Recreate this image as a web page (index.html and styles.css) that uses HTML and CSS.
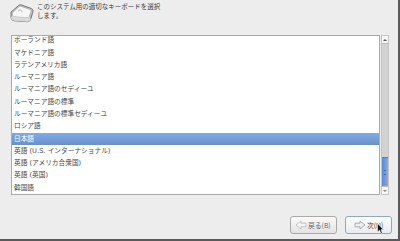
FILE: index.html
```html
<!DOCTYPE html>
<html lang="ja">
<head>
<meta charset="utf-8">
<title>キーボード</title>
<link rel="stylesheet" href="styles.css">
</head>
<body>
<div class="window">
  <header class="head">
    <svg class="kbd-icon" width="24" height="21" viewBox="0 0 24 21">
      <path d="M1 9 L8.8 2.4 Q10 1.4 11.6 2 L21.6 5.6 Q23.4 6.4 23 8.6 L20.6 16.4 Q19.8 18.8 17.4 18.7 L4.2 17.8 Q1.2 17.4 1 14.6 Z" fill="#bdbdbd" stroke="#6f6f6f" stroke-width="0.9"/>
      <path d="M2.6 9.4 L9.4 3.6 Q10.2 3 11.2 3.4 L20.2 6.6 Q21.4 7.1 21 8.4 L19.2 13.6 Q18.7 14.8 17.4 14.7 L4.4 13.8 Q2.6 13.6 2.5 12.2 Z" fill="#f6f6f6" stroke="#a8a8a8" stroke-width="0.6"/>
      <path d="M4.4 13.8 L17.4 14.7 Q18.7 14.8 19.2 13.6 L20.6 16.4 Q19.8 18.8 17.4 18.7 L4.2 17.8 Q1.2 17.4 1 14.6 L2.5 12.2 Q2.6 13.6 4.4 13.8 Z" fill="#d9d9d9"/>
      <path d="M8 8.2 L10.2 6.6 L12.6 9.2" fill="none" stroke="#999" stroke-width="0.7"/>
    </svg>
    <p class="prompt">このシステム用の適切なキーボードを選択<br>します。</p>
  </header>

  <div class="listarea">
    <div class="listbox">
      <ul class="list">
        <li>ポーランド語</li>
        <li>マケドニア語</li>
        <li>ラテンアメリカ語</li>
        <li>ルーマニア語</li>
        <li>ルーマニア語のセディーユ</li>
        <li>ルーマニア語の標準</li>
        <li>ルーマニア語の標準セディーユ</li>
        <li>ロシア語</li>
        <li class="selected">日本語</li>
        <li>英語 (U.S. インターナショナル)</li>
        <li>英語 (アメリカ合衆国)</li>
        <li>英語 (英国)</li>
        <li>韓国語</li>
      </ul>
    </div>
    <div class="scrollbar">
      <div class="sb-btn up"></div>
      <div class="trough"><div class="thumb"></div></div>
      <div class="sb-btn down"></div>
    </div>
  </div>

  <footer class="buttons">
    <button class="btn back" type="button">
      <svg class="arrow" width="12" height="10" viewBox="0 0 12 10">
        <path d="M11 3.2 H6 V1 L1 5 L6 9 V6.8 H11 Z" fill="#f4f4f4" stroke="#b8b8b8" stroke-width="0.8"/>
      </svg>
      <span>戻る(B)</span>
    </button>
    <button class="btn next" type="button">
      <svg class="arrow" width="12" height="10" viewBox="0 0 12 10">
        <path d="M1 3.2 H6 V1 L11 5 L6 9 V6.8 H1 Z" fill="#eeeeee" stroke="#9c9c9c" stroke-width="0.8"/>
      </svg>
      <span>次(N)</span>
      <svg class="cursor" width="7" height="11" viewBox="0 0 7 11">
        <path d="M0.5 0.5 V9 L2.5 7.2 L4 10.5 L5.4 9.9 L4 6.7 L6.5 6.7 Z" fill="#111" stroke="#fff" stroke-width="0.6"/>
      </svg>
    </button>
  </footer>
</div>
</body>
</html>
```

FILE: styles.css
```css
html, body {
  margin: 0;
  padding: 0;
}

body {
  width: 400px;
  height: 241px;
  overflow: hidden;
  background: #ededed;
  font-family: "DejaVu Sans", "Noto Sans CJK JP", sans-serif;
  color: #444;
}

.window {
  box-sizing: border-box;
  width: 400px;
  height: 241px;
  margin: 0;
  padding-left: 2px;
  border-right: 2px solid #5a5a5a;
  border-bottom: 2px solid #5a5a5a;
  display: flex;
  flex-direction: column;
}

.head {
  box-sizing: border-box;
  height: 35px;
  margin-left: 8px;
  padding-top: 3px;
  display: flex;
  align-items: flex-start;
  gap: 3px;
}

.kbd-icon {
  display: block;
  flex: none;
}

.prompt {
  margin: 0;
  font-size: 6.5px;
  line-height: 9.4px;
  color: #3a3a3a;
}

.listarea {
  display: flex;
  gap: 1px;
  margin-left: 9px;
  height: 160px;
}

.listbox {
  box-sizing: border-box;
  width: 369px;
  height: 160px;
  border: 1px solid #aaaaaa;
  background: #ffffff;
  overflow: hidden;
}

.list {
  margin: -1.8px 0 0;
  padding: 0;
  list-style: none;
}

.list li {
  height: 12.3px;
  line-height: 12.3px;
  padding-left: 2px;
  font-size: 6.7px;
  white-space: nowrap;
  color: #474747;
}

.list li.selected {
  background: linear-gradient(#84abe0, #6391d0);
  color: #ffffff;
}

.scrollbar {
  box-sizing: border-box;
  width: 8px;
  height: 160px;
  display: flex;
  flex-direction: column;
  background: #d2d2d2;
  border: 1px solid #c4c4c4;
}

.sb-btn {
  height: 7px;
  flex: none;
  background: #f7f7f7;
  border-bottom: 1px solid #bdbdbd;
  display: flex;
  align-items: center;
  justify-content: center;
}

.sb-btn.down {
  border-bottom: none;
  border-top: 1px solid #bdbdbd;
}

.sb-btn.up::before {
  content: "";
  border-left: 2px solid transparent;
  border-right: 2px solid transparent;
  border-bottom: 2px solid #555;
}

.sb-btn.down::before {
  content: "";
  border-left: 2px solid transparent;
  border-right: 2px solid transparent;
  border-top: 2px solid #888;
}

.trough {
  flex: 1;
  display: flex;
  flex-direction: column;
  justify-content: flex-end;
}

.thumb {
  height: 28px;
  background: linear-gradient(90deg, #5b8bcd, #87ace0);
  border-top: 1px solid #4f7fc0;
  display: flex;
  align-items: center;
  justify-content: center;
}

.thumb::before {
  content: "";
  width: 2px;
  height: 3px;
  border-top: 1px solid #3f6aa8;
  border-bottom: 1px solid #3f6aa8;
}

.buttons {
  margin-top: 21px;
  padding-right: 6px;
  display: flex;
  justify-content: flex-end;
  gap: 8px;
}

.btn {
  position: relative;
  box-sizing: border-box;
  width: 47px;
  height: 18px;
  margin: 0;
  padding: 0 0 0 4px;
  border: 1px solid #a9a9a9;
  border-radius: 3px;
  background: linear-gradient(#fafafa, #e3e3e3);
  display: flex;
  align-items: center;
  gap: 0;
  font-family: "Noto Sans CJK JP", sans-serif;
  font-size: 6.8px;
  color: #555;
}

.btn.back {
  color: #6a6a6a;
}

.btn.next {
  border-color: #8aa6d2;
  background: linear-gradient(#fdfdfd, #e8ebf0);
  padding-left: 8px;
  color: #3a3a3a;
}

.arrow {
  display: block;
  flex: none;
  margin-right: 1px;
}

.cursor {
  position: absolute;
  left: 31px;
  top: 6px;
}
```
